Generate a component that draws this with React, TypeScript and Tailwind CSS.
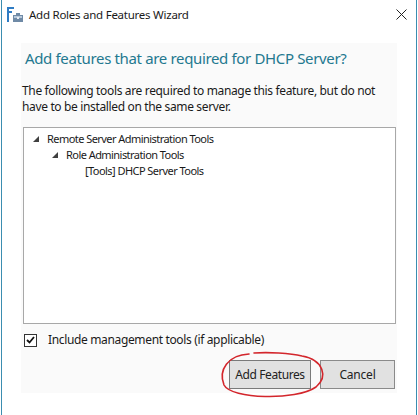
import React from "react";

const font = { fontFamily: '"Segoe UI", "Noto Sans", "Liberation Sans", sans-serif' };

function WizardIcon() {
  return (
    <svg width="16" height="16" viewBox="0 0 16 16" className="shrink-0">
      <rect x="0" y="0" width="2" height="15" fill="#2f7cc4" />
      <rect x="0" y="0" width="7" height="2" fill="#2f7cc4" />
      <rect x="0" y="4" width="5" height="2" fill="#2f7cc4" />
      <path d="M6 8 h3 v-2 h4 v2 h3 v7 h-10 z" fill="#6f8aa6" />
      <rect x="7" y="9" width="8" height="2" fill="#b7c8da" />
      <rect x="10" y="10" width="2" height="2" fill="#e6edf4" />
    </svg>
  );
}

function Expander() {
  return (
    <svg width="6" height="6" viewBox="0 0 6 6" className="shrink-0">
      <polygon points="6,0 6,6 0,6" fill="#404040" />
    </svg>
  );
}

export default function App() {
  return (
    <div className="relative w-[418px] h-[415px] bg-white overflow-hidden text-[#1a1a1a]" style={font}>
      <div className="ml-px w-[416px] h-full border-x border-[#3b8db0] flex flex-col">
        {/* title bar */}
        <div className="h-[29px] flex items-center pl-[5px] pr-[9px] gap-[6px]">
          <WizardIcon />
          <span className="text-[11.5px] leading-none flex-1 tracking-[-0.25px]">Add Roles and Features Wizard</span>
          <svg width="11" height="11" viewBox="0 0 11 11">
            <path d="M0.5 0.5 L10.5 10.5 M10.5 0.5 L0.5 10.5" stroke="#222" strokeWidth="1" />
          </svg>
        </div>

        {/* content */}
        <div className="ml-[19px] mr-[19px] mt-[14px] h-[350px] bg-[#fafafa] flex flex-col">
          <h1 className="pl-[4px] pt-[5px] text-[15px] leading-[20px] text-[#23788f] tracking-[-0.35px]">
            Add features that are required for DHCP Server?
          </h1>
          <p className="mt-[15px] pl-[1px] pr-[10px] text-[12px] leading-[16px] tracking-[-0.35px]">
            The following tools are required to manage this feature, but do not have to be installed on the same server.
          </p>
          <div className="mt-[12px] ml-[2px] w-[373px] h-[197px] bg-white border border-[#a8a8a8] pt-[3px] text-[11px] leading-[16px] tracking-[-0.55px]">
            <div className="flex items-center gap-[8px] pl-[9px] h-[16px]">
              <Expander />
              <span>Remote Server Administration Tools</span>
            </div>
            <div className="flex items-center gap-[8px] pl-[28px] h-[16px]">
              <Expander />
              <span>Role Administration Tools</span>
            </div>
            <div className="flex items-center pl-[61px] h-[16px]">
              <span>[Tools] DHCP Server Tools</span>
            </div>
          </div>
          <label className="mt-[8px] ml-[3px] flex items-center gap-[11px] text-[12px] leading-[16px] tracking-[-0.35px]">
            <span className="w-[13px] h-[13px] border border-[#333] bg-white flex items-center justify-center">
              <svg width="9" height="8" viewBox="0 0 9 8">
                <path d="M1 4 L3.5 6.5 L8 1" stroke="#111" strokeWidth="1.8" fill="none" />
              </svg>
            </span>
            Include management tools (if applicable)
          </label>
          <div className="mt-[12px] flex justify-end gap-[9px] pr-[2px]">
            <button className="w-[82px] h-[29px] bg-[#e1e1e1] border border-[#7a7a7a] text-[12px] tracking-[-0.4px] text-[#222]">
              Add Features
            </button>
            <button className="w-[75px] h-[29px] bg-[#e1e1e1] border border-[#8a8a8a] text-[12px] tracking-[-0.2px] text-[#222]">
              Cancel
            </button>
          </div>
        </div>
      </div>

      {/* hand-drawn annotation */}
      <svg className="absolute left-0 top-0 pointer-events-none" width="418" height="415">
        <path
          d="M249 354 C228 355 218 370 224 385 C231 399 296 401 316 387 C328 377 324 360 302 356 C290 353 268 352 254 353"
          stroke="#d3262c"
          strokeWidth="1.6"
          fill="none"
          strokeLinecap="round"
        />
      </svg>
    </div>
  );
}
